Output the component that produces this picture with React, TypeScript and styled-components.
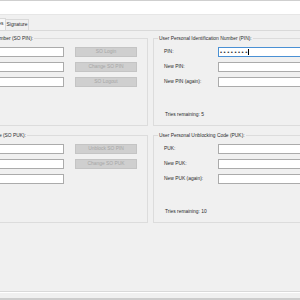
import React, { FC } from 'react';
import styled, { createGlobalStyle } from 'styled-components';

const GlobalStyle = createGlobalStyle`
  html, body {
    margin: 0;
    width: 300px;
    height: 300px;
    overflow: hidden;
    background: #f0f0f0;
  }
  body {
    font-family: "Liberation Sans", Arial, sans-serif;
    font-size: 4.9px;
    color: #2a2a2a;
  }
`;

const Window = styled.div`
  width: 507px;
  height: 300px;
  margin-left: -103px;
  display: flex;
  flex-direction: column;
  border-bottom: 2px solid #cdcdcd;
  box-sizing: border-box;
`;

const TopStrip = styled.div`
  height: 15px;
  box-sizing: border-box;
  background: #ffffff;
  border-top: 1px solid #cfcfcf;
  border-bottom: 1px solid #e6e6e6;
`;

const TabStrip = styled.div`
  height: 15px;
  display: flex;
  align-items: flex-end;
  padding-left: 33px;
`;

const Tab = styled.div<{ $active?: boolean }>`
  height: ${({ $active }) => ($active ? 12 : 11)}px;
  box-sizing: border-box;
  padding: 0 1px;
  margin-right: -1px;
  border: 1px solid #d9d9d9;
  border-bottom: none;
  background: ${({ $active }) => ($active ? '#f7f7f7' : '#f0f0f0')};
  line-height: 10px;
  white-space: nowrap;
`;

const TabPage = styled.div`
  flex: 1;
  margin-bottom: 6px;
  border: 1px solid #d9d9d9;
  box-shadow: 0 1px 0 #ffffff;
  padding: 7px 5px 0;
`;

const Columns = styled.div`
  display: grid;
  grid-template-columns: 245px 245px;
  column-gap: 5px;
  row-gap: 9px;
`;

const GroupBox = styled.div`
  position: relative;
  height: 88px;
  box-sizing: border-box;
  border: 1px solid #dcdcdc;
  padding: 8px 10px 0;
  display: flex;
  flex-direction: column;
`;

const Legend = styled.div`
  position: absolute;
  top: -3.5px;
  left: 4px;
  padding: 0 1px;
  line-height: 6px;
  background: #f0f0f0;
  white-space: nowrap;
`;

const Rows = styled.div`
  display: flex;
  flex-direction: column;
  gap: 5px;
`;

const Row = styled.div<{ $withButton?: boolean }>`
  display: grid;
  grid-template-columns: ${({ $withButton }) => ($withButton ? '43px 96px 62px' : '43px 1fr')};
  column-gap: 11px;
  align-items: center;
  height: 10px;
`;

const Label = styled.span`
  white-space: nowrap;
  line-height: 6px;
`;

const TextBox = styled.div<{ $focused?: boolean }>`
  height: 10px;
  box-sizing: border-box;
  background: #ffffff;
  border: 1px solid ${({ $focused }) => ($focused ? '#4a90d4' : '#ababab')};
  display: flex;
  align-items: center;
  padding-left: 1px;
  overflow: hidden;
`;

const Dots = styled.span`
  font-size: 6px;
  letter-spacing: 1.5px;
  line-height: 6px;
  color: #333;
`;

const Caret = styled.span`
  width: 1px;
  height: 6px;
  background: #000;
  margin-left: -1px;
`;

const Button = styled.button`
  height: 10px;
  box-sizing: border-box;
  padding: 0;
  border: 1px solid #c4c4c4;
  background: #cfcfcf;
  color: #a6a6a6;
  font-family: inherit;
  font-size: 4.9px;
  line-height: 8px;
  white-space: nowrap;
`;

const Tries = styled.div`
  margin-top: 25px;
  padding-left: 1px;
  line-height: 6px;
`;

interface FieldProps {
  label: string;
  button?: string;
  focused?: boolean;
  value?: string;
}

const Field: FC<FieldProps> = ({ label, button, focused, value }) => (
  <Row $withButton={button !== undefined}>
    <Label>{label}</Label>
    <TextBox $focused={focused}>
      {value && <Dots>{value}</Dots>}
      {focused && <Caret />}
    </TextBox>
    {button !== undefined && (button ? <Button disabled>{button}</Button> : <span />)}
  </Row>
);

const App: FC = () => (
  <>
    <GlobalStyle />
    <Window>
      <TopStrip />
      <TabStrip>
        <Tab>General</Tab>
        <Tab>Certificates</Tab>
        <Tab $active>PIN Codes</Tab>
        <Tab>Signature</Tab>
      </TabStrip>
      <TabPage>
        <Columns>
          <GroupBox>
            <Legend>Security Officer Personal Identification Number (SO PIN):</Legend>
            <Rows>
              <Field label="SO PIN:" button="SO Login" />
              <Field label="New SO PIN:" button="Change SO PIN" />
              <Field label="New SO PIN (again):" button="SO Logout" />
            </Rows>
          </GroupBox>
          <GroupBox>
            <Legend>User Personal Identification Number (PIN):</Legend>
            <Rows>
              <Field label="PIN:" focused value="••••••••" />
              <Field label="New PIN:" />
              <Field label="New PIN (again):" />
            </Rows>
            <Tries>Tries remaining: 5</Tries>
          </GroupBox>
          <GroupBox>
            <Legend>Security Officer Personal Unblocking Code (SO PUK):</Legend>
            <Rows>
              <Field label="SO PUK:" button="Unblock SO PIN" />
              <Field label="New SO PUK:" button="Change SO PUK" />
              <Field label="New SO PUK (again):" button="" />
            </Rows>
          </GroupBox>
          <GroupBox>
            <Legend>User Personal Unblocking Code (PUK):</Legend>
            <Rows>
              <Field label="PUK:" />
              <Field label="New PUK:" />
              <Field label="New PUK (again):" />
            </Rows>
            <Tries>Tries remaining: 10</Tries>
          </GroupBox>
        </Columns>
      </TabPage>
    </Window>
  </>
);

export default App;
